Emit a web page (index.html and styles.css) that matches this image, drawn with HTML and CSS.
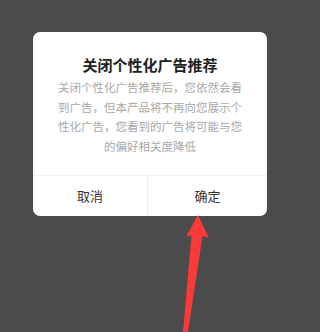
FILE: index.html
```html
<!DOCTYPE html>
<html lang="zh-CN">
<head>
<meta charset="utf-8">
<link rel="stylesheet" href="styles.css">
</head>
<body>
<div class="screen">
  <div class="dialog">
    <div class="content">
      <div class="title">关闭个性化广告推荐</div>
      <div class="desc">关闭个性化广告推荐后，您依然会看到广告，但本产品将不再向您展示个性化广告，您看到的广告将可能与您的偏好相关度降低</div>
    </div>
    <div class="actions">
      <div class="btn btn-cancel">取消</div>
      <div class="btn btn-ok">确定</div>
    </div>
  </div>
  <svg class="arrow" width="300" height="332" viewBox="0 0 300 332">
    <polygon points="198,215 209,238 202.5,236 188,332 183,332 191.5,235 186,237" fill="#fa3a3a"/>
  </svg>
</div>
</body>
</html>
```
FILE: styles.css
```css
html, body {
  margin: 0;
  padding: 0;
  background: #4b4b4b;
}
body {
  font-family: "Noto Sans CJK SC", "Noto Sans", sans-serif;
}
.screen {
  position: relative;
  width: 300px;
  height: 332px;
  background: #4b4b4b;
  padding-top: 32px;
  box-sizing: border-box;
  overflow: hidden;
}
.dialog {
  width: 234px;
  margin-left: 33px;
  background: #fff;
  border-radius: 7px;
  overflow: hidden;
}
.content {
  padding: 23px 22px 18px;
  text-align: center;
}
.title {
  font-size: 15px;
  font-weight: 700;
  line-height: 20px;
  color: #222;
  margin-bottom: 3px;
}
.desc {
  font-size: 11.5px;
  line-height: 19.7px;
  color: #a8a8a8;
}
.actions {
  display: flex;
  border-top: 1px solid #f0f0f0;
  height: 40px;
}
.btn {
  display: flex;
  align-items: center;
  justify-content: center;
  font-size: 13px;
  color: #333;
}
.btn-cancel {
  width: 114px;
}
.btn-ok {
  flex: 1;
  border-left: 1px solid #f0f0f0;
}
.arrow {
  position: absolute;
  left: 0;
  top: 0;
}
```
